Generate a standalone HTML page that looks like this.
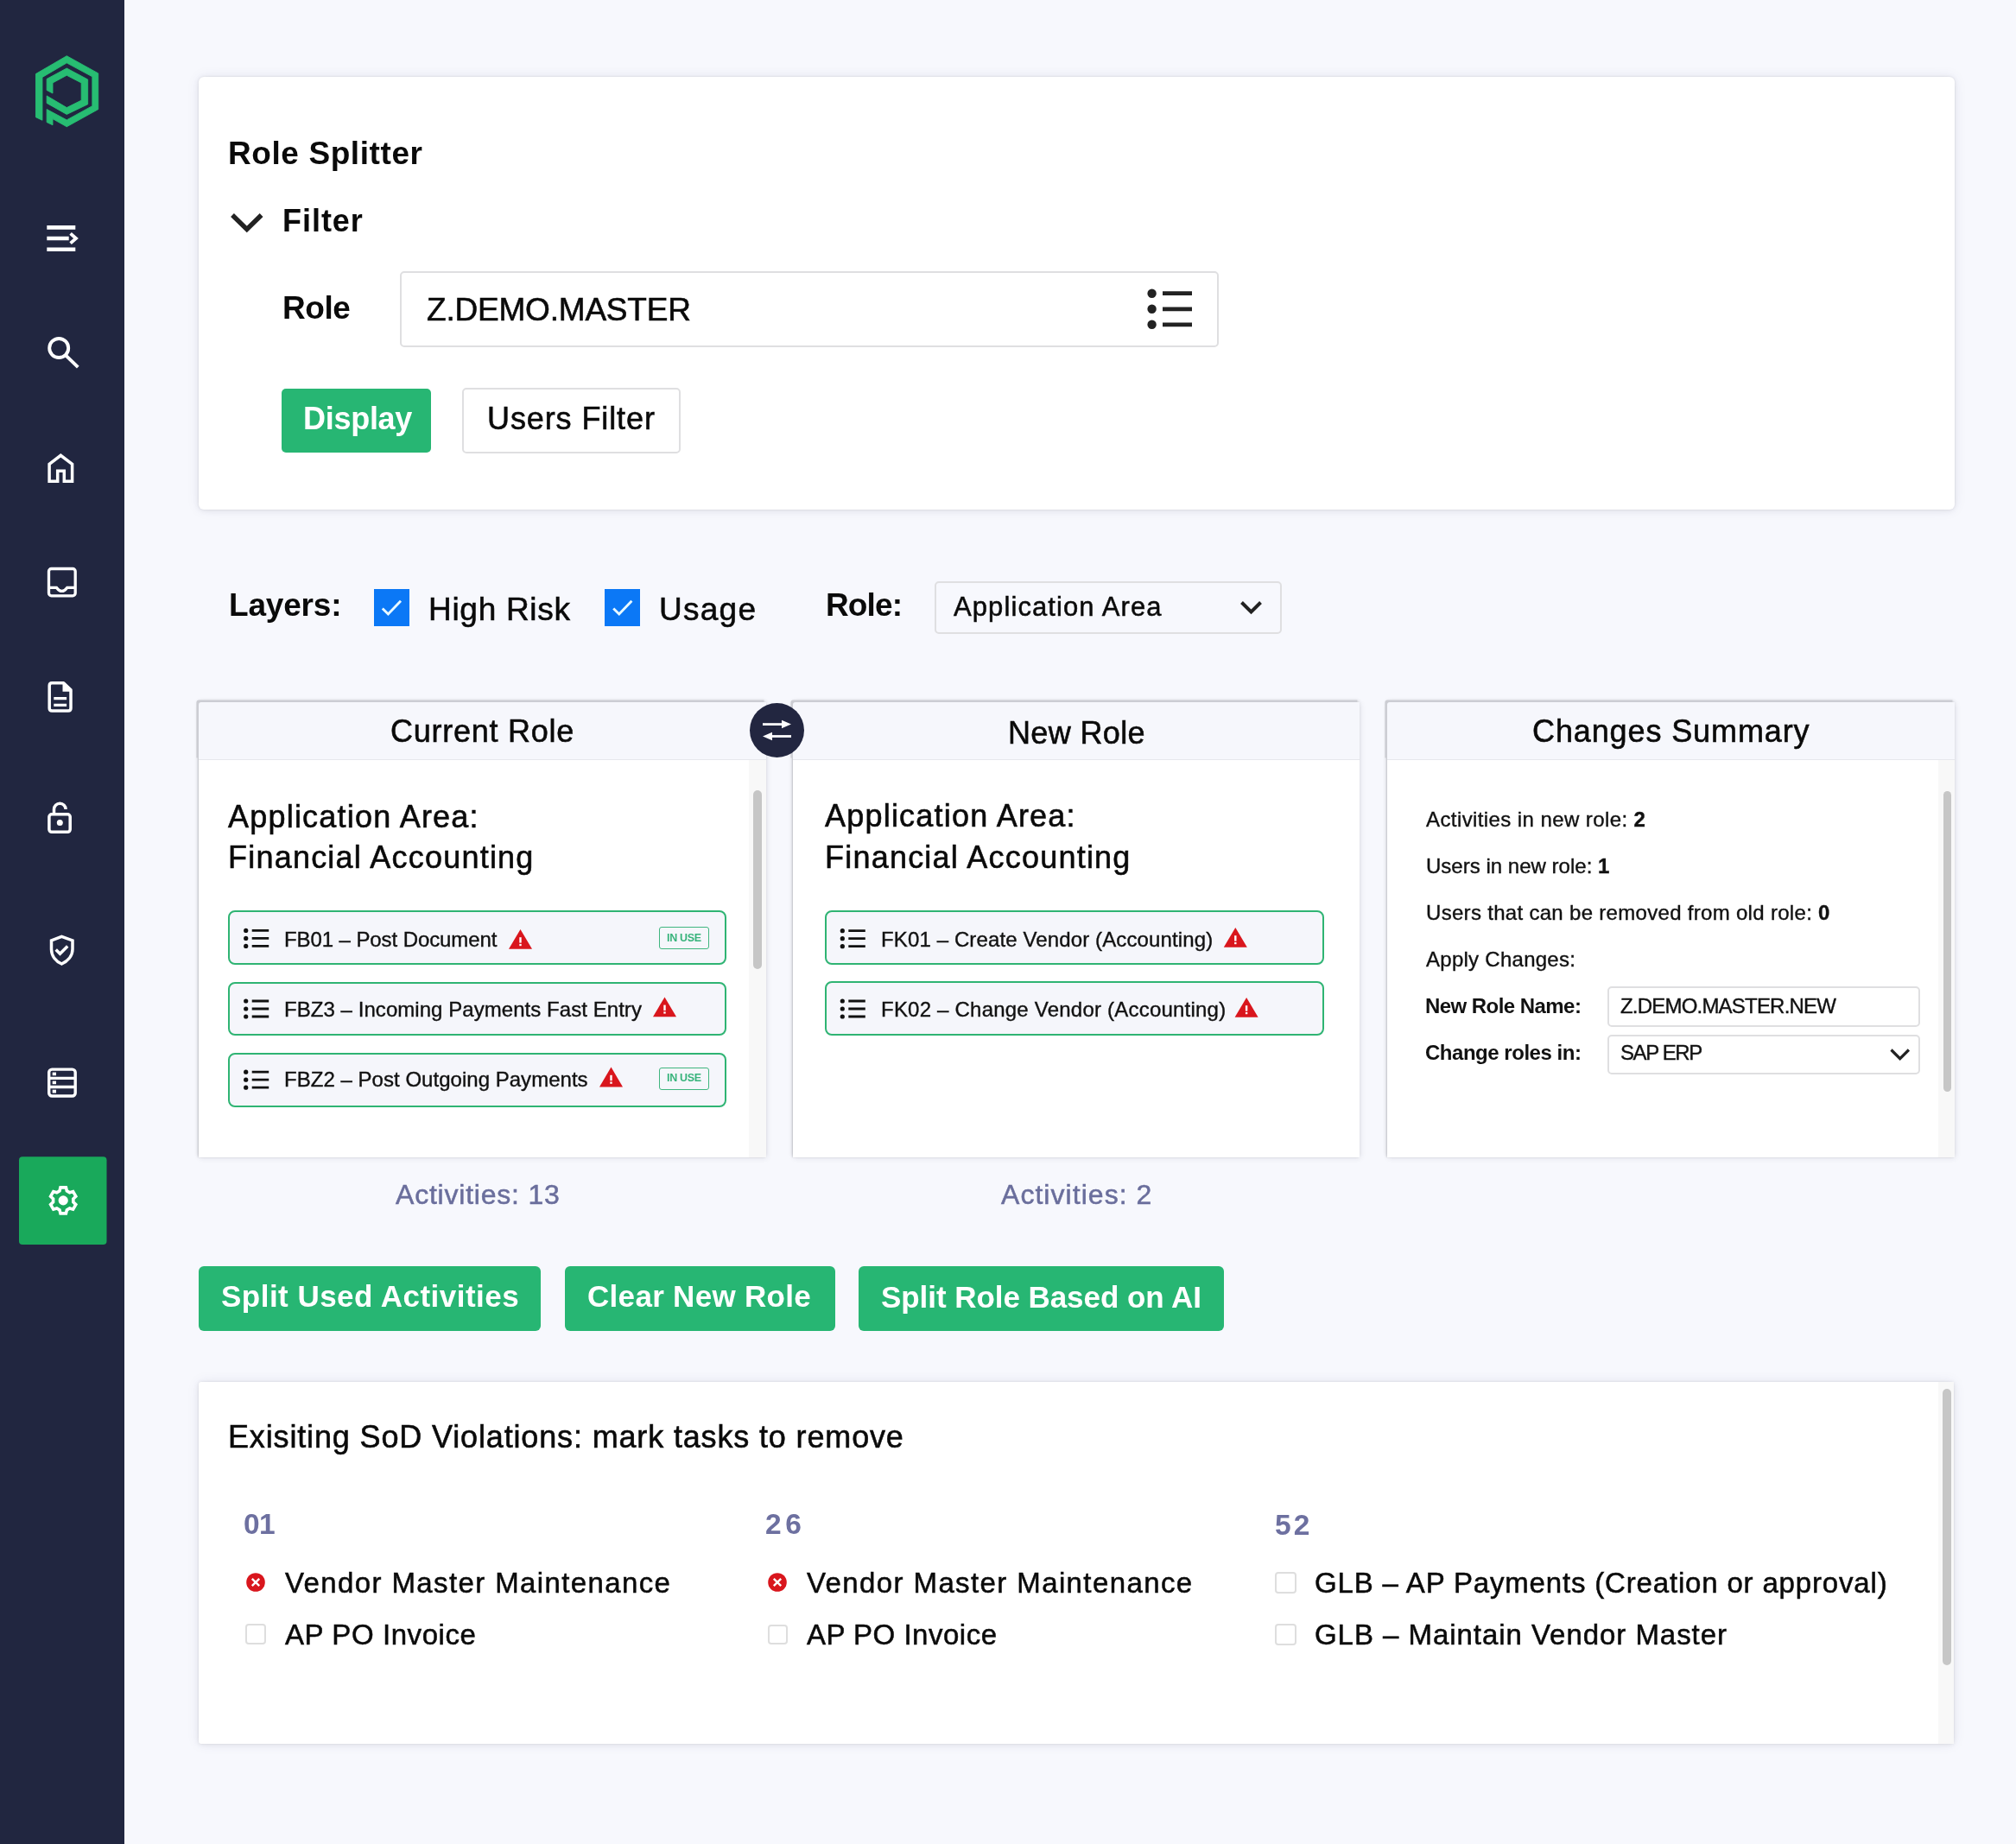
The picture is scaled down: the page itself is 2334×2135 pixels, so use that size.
<!DOCTYPE html>
<html><head><meta charset="utf-8"><title>Role Splitter</title>
<style>
html,body{margin:0;padding:0;}
body{width:2334px;height:2135px;background:#f7f8fd;position:relative;overflow:hidden;font-family:"Liberation Sans",sans-serif;}
.a{position:absolute;box-sizing:border-box;}
.t{position:absolute;white-space:nowrap;line-height:1;will-change:transform;font-family:"Liberation Sans",sans-serif;}
.t b{font-weight:700;}
.sidebar{left:0;top:0;width:144px;height:2135px;background:#212640;}
.card{background:#fff;border-radius:6px;box-shadow:0 0 3px rgba(0,0,0,0.08),0 1px 7px rgba(0,0,0,0.07),0 0 16px rgba(40,40,110,0.07);}
.panel{background:#fff;border-radius:3px 0 0 0;box-shadow:-1px -2px 4px rgba(0,0,0,0.10),1px 1px 6px rgba(40,40,70,0.10),-1px 0 2px rgba(0,0,0,0.12);}
.phead{background:#f6f7fc;border-bottom:1px solid #e6e7ec;border-radius:3px 0 0 0;box-shadow:-2.6px -2.6px 0 0 #cccdd3;}
.item{background:#f5f6fb;border:2.5px solid #2fb473;border-radius:8px;}
.btn{background:#27b673;border-radius:6px;}
.inp{border:2px solid #dfdfe1;border-radius:5px;}
.badge{border:1.8px solid #40b67f;border-radius:3px;}
.track{background:#f8f8f8;}
.thumb{background:#c6c6c6;border-radius:5px;}
.cb{background:#0b78f6;}
.ecb{border:2px solid #dedede;border-radius:4px;background:#fff;}

</style></head><body>
<div class="a sidebar"></div>
<!-- logo -->
<svg class="a" style="left:20px;top:40px" width="120" height="120" viewBox="0 0 1844 1844">
  <g fill="#27bd72" stroke="#27bd72" stroke-width="14" stroke-linejoin="round">
    <path d="M330,1470 L330,700 L880,380 L1440,690 L1440,1330 L880,1640 L630,1500 L630,1610 L525,1560 L525,1330 L880,1520 L1335,1270 L1335,750 L880,505 L445,760 L445,1525 Z"/>
    <path d="M525,990 L525,790 L880,600 L1255,800 L1255,1240 L880,1420 L525,1220 L525,1090 L880,1300 L1140,1170 L1140,860 L880,725 L630,860 L630,1045 Z"/>
  </g>
</svg>
<!-- sidebar icons -->
<svg class="a" style="left:0;top:0" width="144" height="1460" viewBox="0 0 144 1460">
  <g fill="none" stroke="#fff" stroke-width="4.6" stroke-linecap="butt" stroke-linejoin="miter">
    <path d="M54.3,263.4 H87.3 M54.3,276 H79.7 M54.3,288.7 H87.3"/>
    <path d="M81.6,270.3 L88,276 L81.6,281.6" stroke-width="3.8"/>
  </g>
  <g fill="none" stroke="#fff" stroke-width="3.9">
    <circle cx="68.2" cy="403" r="11"/>
    <path d="M76.3,411.6 L90.3,425.1"/>
  </g>
  <path d="M74.3,557.3 L83.6,557.3 L83.6,537.3 L70.3,527.3 L57.1,537.3 L57.1,557.3 L66.7,557.3 L66.7,545.3 L74.3,545.3 Z" fill="none" stroke="#fff" stroke-width="3.5"/>
  <g fill="none" stroke="#fff" stroke-width="3.3">
    <rect x="56.5" y="658.5" width="30.7" height="31.3" rx="3"/>
    <path d="M56.5,680.4 L65.5,680.4 Q71.6,688.5 77.7,680.4 L87.2,680.4"/>
  </g>
  <g fill="none" stroke="#fff" stroke-width="3.5" stroke-linejoin="round">
    <path d="M73.6,790.7 L60.2,790.7 Q57.2,790.7 57.2,793.7 L57.2,820.1 Q57.2,823.1 60.2,823.1 L79,823.1 Q82,823.1 82,820.1 L82,798.8 Z"/>
    <path d="M62.3,808.6 H77.1 M62.3,816.3 H77.1" stroke-width="3.2"/>
  </g>
  <path d="M72.5,789.5 L72.5,800.8 L83.5,800.8 Z" fill="#fff"/>
  <g fill="none" stroke="#fff" stroke-width="3.5">
    <rect x="56.9" y="942.8" width="24.3" height="20.5" rx="3"/>
    <path d="M62.5,942.8 L62.5,937 A6.8,6.8 0 0 1 76.1,937"/>
  </g>
  <circle cx="69.3" cy="952.5" r="3.5" fill="#fff"/>
  <g fill="none" stroke="#fff" stroke-width="3.5">
    <path d="M71.4,1084.3 L84,1088.9 L84,1099 C84,1107 78,1113 71.4,1116 C64.8,1113 59.5,1107 59.5,1099 L59.5,1088.9 Z"/>
    <path d="M64.7,1099.5 L69.5,1104.3 L78.2,1095.6"/>
  </g>
  <g fill="none" stroke="#fff" stroke-width="3.4">
    <rect x="56.7" y="1238.1" width="30.5" height="30.9" rx="3.5"/>
    <path d="M56.7,1248.4 H87.2 M56.7,1258.5 H87.2"/>
  </g>
  <g fill="#fff">
    <rect x="60.7" y="1241.6" width="4.3" height="3.6"/>
    <rect x="60.7" y="1251.6" width="4.3" height="3.6"/>
    <rect x="60.7" y="1261.7" width="4.3" height="3.8"/>
  </g>
  <rect x="22" y="1339.2" width="101.5" height="101.8" rx="4" fill="#19a95b"/>
  <path d="M69.00,1378.90 L70.00,1374.90 L76.40,1374.90 L77.40,1378.90 L80.63,1380.76 L84.59,1379.63 L87.79,1385.17 L84.83,1388.04 L84.83,1391.76 L87.79,1394.63 L84.59,1400.17 L80.63,1399.04 L77.40,1400.90 L76.40,1404.90 L70.00,1404.90 L69.00,1400.90 L65.77,1399.04 L61.81,1400.17 L58.61,1394.63 L61.57,1391.76 L61.57,1388.04 L58.61,1385.17 L61.81,1379.63 L65.77,1380.76 Z" fill="none" stroke="#fff" stroke-width="3.6" stroke-linejoin="miter"/>
  <circle cx="73.2" cy="1389.9" r="5.6" fill="#fff"/>
</svg>

<!-- top card -->
<div class="a card" style="left:230px;top:89px;width:2033px;height:501px"></div>
<svg class="a" style="left:260px;top:240px" width="50" height="35" viewBox="260 240 50 35">
  <path d="M269,249 L285.8,265.5 L302.6,249" fill="none" stroke="#222" stroke-width="5.5"/>
</svg>
<div class="a inp" style="left:463px;top:314px;width:948px;height:88px;background:#fff"></div>
<svg class="a" style="left:1320px;top:325px" width="70" height="65" viewBox="1320 325 70 65">
  <g fill="#222"><circle cx="1333.6" cy="339.7" r="5.2"/><circle cx="1333.6" cy="357.8" r="5.2"/><circle cx="1333.6" cy="375.8" r="5.2"/></g>
  <g stroke="#222" stroke-width="4.8"><path d="M1346,339.7 H1380 M1346,357.8 H1380 M1346,375.8 H1380"/></g>
</svg>
<div class="a btn" style="left:326px;top:450px;width:173px;height:74px;border-radius:5px"></div>
<div class="a inp" style="left:534.6px;top:449.4px;width:253px;height:75.6px;background:#fff"></div>

<!-- layers row -->
<div class="a cb" style="left:433px;top:682px;width:41px;height:43px"></div>
<div class="a cb" style="left:700.4px;top:682px;width:41px;height:43px"></div>
<svg class="a" style="left:430px;top:680px" width="320" height="50" viewBox="430 680 320 50">
  <path d="M442.8,704.5 L449.4,711 L464,695.8" fill="none" stroke="#e8f9ff" stroke-width="2.9"/>
  <path d="M710.2,704.5 L716.8,711 L731.4,695.8" fill="none" stroke="#e8f9ff" stroke-width="2.9"/>
</svg>
<div class="a inp" style="left:1082px;top:673px;width:402px;height:61px"></div>
<svg class="a" style="left:1430px;top:690px" width="40" height="30" viewBox="1430 690 40 30">
  <path d="M1437.5,697.5 L1448.5,708.5 L1459.5,697.5" fill="none" stroke="#222" stroke-width="4"/>
</svg>

<!-- panels -->
<div class="a panel" style="left:230px;top:813px;width:657px;height:527px"></div>
<div class="a phead" style="left:230px;top:813px;width:657px;height:67px"></div>
<div class="a track" style="left:867px;top:880px;width:20px;height:460px"></div>
<div class="a thumb" style="left:872.2px;top:915px;width:9.8px;height:207px"></div>

<div class="a panel" style="left:918px;top:813px;width:656px;height:527px"></div>
<div class="a phead" style="left:918px;top:813px;width:656px;height:67px"></div>

<div class="a panel" style="left:1606px;top:813px;width:657px;height:527px"></div>
<div class="a phead" style="left:1606px;top:813px;width:657px;height:67px"></div>
<div class="a track" style="left:2244px;top:880px;width:19px;height:460px"></div>
<div class="a thumb" style="left:2249.6px;top:915.7px;width:9.8px;height:348px"></div>

<!-- swap circle -->
<svg class="a" style="left:866px;top:812px" width="68" height="68" viewBox="866 812 68 68">
  <circle cx="899.5" cy="845.5" r="31.5" fill="#222640"/>
  <g fill="#fff">
    <rect x="883" y="837.2" width="24" height="2.8"/>
    <path d="M905,833.8 L916,838.6 L905,843.3 Z"/>
    <rect x="892" y="851.1" width="24" height="2.8"/>
    <path d="M894,847.7 L883,852.5 L894,857.2 Z"/>
  </g>
</svg>

<!-- items panel 1 -->
<div class="a item" style="left:264px;top:1054px;width:577px;height:63px"></div>
<div class="a item" style="left:264px;top:1137px;width:577px;height:62px"></div>
<div class="a item" style="left:264px;top:1219px;width:577px;height:63px"></div>
<!-- items panel 2 -->
<div class="a item" style="left:954.6px;top:1054.3px;width:578.4px;height:62.5px"></div>
<div class="a item" style="left:954.6px;top:1136.4px;width:578.4px;height:62.9px"></div>


<div class="a badge" style="left:763.3px;top:1073.4px;width:57.9px;height:26.1px"></div>
<div class="a badge" style="left:763.3px;top:1236.2px;width:57.9px;height:26.1px"></div>

<!-- panel3 inputs -->
<div class="a inp" style="left:1860.8px;top:1142.3px;width:362.7px;height:46.5px;background:#fff"></div>
<div class="a inp" style="left:1860.8px;top:1198px;width:362.7px;height:46.3px;background:#fff"></div>

<!-- bottom buttons -->
<div class="a btn" style="left:230px;top:1465.5px;width:396px;height:75px"></div>
<div class="a btn" style="left:654px;top:1465.5px;width:313px;height:75px"></div>
<div class="a btn" style="left:994.2px;top:1465.5px;width:423px;height:75px"></div>

<!-- bottom card -->
<div class="a card" style="left:230px;top:1600px;width:2032px;height:419px;border-radius:3px"></div>
<div class="a track" style="left:2244px;top:1600px;width:18px;height:419px"></div>
<div class="a thumb" style="left:2248.8px;top:1607.7px;width:10px;height:320px"></div>
<div class="a ecb" style="left:284.4px;top:1880.3px;width:23.2px;height:23.8px"></div>
<div class="a ecb" style="left:888.5px;top:1880.6px;width:23.2px;height:23.2px"></div>
<div class="a ecb" style="left:1476px;top:1820px;width:24.6px;height:24.5px"></div>
<div class="a ecb" style="left:1476px;top:1880.3px;width:24.6px;height:24.5px"></div>

<svg class="a" style="left:0;top:0" width="2334" height="2135" viewBox="0 0 2334 2135">
  <defs>
    <g id="li">
      <circle cx="3" cy="3" r="2.6" fill="#111"/><circle cx="3" cy="12" r="2.6" fill="#111"/><circle cx="3" cy="21" r="2.6" fill="#111"/>
      <path d="M10,3 H29.5 M10,12 H29.5 M10,21 H29.5" stroke="#111" stroke-width="2.8"/>
    </g>
    <g id="warn">
      <path d="M13.5,0 L27,22.8 L0,22.8 Z" fill="#d9161d"/>
      <rect x="12.3" y="9.2" width="2.4" height="6.4" fill="#fff"/>
      <rect x="12.3" y="16.9" width="2.4" height="2.3" fill="#fff"/>
    </g>
    <g id="xc">
      <circle cx="0" cy="0" r="10.8" fill="#d9161d"/>
      <path d="M-4.2,-4.2 L4.2,4.2 M4.2,-4.2 L-4.2,4.2" stroke="#fff" stroke-width="2.4"/>
    </g>
  </defs>
  <use href="#li" x="281.7" y="1074.4"/>
  <use href="#li" x="281.7" y="1156"/>
  <use href="#li" x="281.7" y="1238.2"/>
  <use href="#li" x="972.3" y="1074.7"/>
  <use href="#li" x="972.3" y="1156"/>
  <use href="#warn" x="589" y="1076"/>
  <use href="#warn" x="756" y="1154.4"/>
  <use href="#warn" x="694" y="1235.6"/>
  <use href="#warn" x="1416.8" y="1074"/>
  <use href="#warn" x="1429.6" y="1155"/>
  <use href="#xc" x="296" y="1832"/>
  <use href="#xc" x="900" y="1832"/>
  <path d="M2189.5,1215.5 L2199.7,1225.7 L2209.9,1215.5" fill="none" stroke="#222" stroke-width="3.2"/>
</svg>

<div class="t" style="left:264.2px;top:158.7px;font-size:37px;font-weight:700;color:#0a0a0a;letter-spacing:0.587px;">Role Splitter</div>
<div class="t" style="left:326.6px;top:238.0px;font-size:36px;font-weight:700;color:#0a0a0a;letter-spacing:0.973px;">Filter</div>
<div class="t" style="left:326.5px;top:337.7px;font-size:37px;font-weight:700;color:#0a0a0a;letter-spacing:-0.409px;">Role</div>
<div class="t" style="left:493.5px;top:339.7px;font-size:37px;font-weight:400;color:#0a0a0a;letter-spacing:-0.199px;-webkit-text-stroke:0.59px #0a0a0a;">Z.DEMO.MASTER</div>
<div class="t" style="left:351.1px;top:466.5px;font-size:36px;font-weight:700;color:#ffffff;letter-spacing:-0.280px;">Display</div>
<div class="t" style="left:564.3px;top:466.5px;font-size:36px;font-weight:400;color:#0a0a0a;letter-spacing:0.897px;-webkit-text-stroke:0.58px #0a0a0a;">Users Filter</div>
<div class="t" style="left:264.5px;top:681.7px;font-size:37px;font-weight:700;color:#0a0a0a;letter-spacing:-0.197px;">Layers:</div>
<div class="t" style="left:496.1px;top:686.7px;font-size:37px;font-weight:400;color:#0a0a0a;letter-spacing:0.704px;-webkit-text-stroke:0.59px #0a0a0a;">High Risk</div>
<div class="t" style="left:762.5px;top:686.7px;font-size:37px;font-weight:400;color:#0a0a0a;letter-spacing:1.252px;-webkit-text-stroke:0.59px #0a0a0a;">Usage</div>
<div class="t" style="left:955.5px;top:682.3px;font-size:37px;font-weight:700;color:#0a0a0a;letter-spacing:-0.885px;">Role:</div>
<div class="t" style="left:1103.8px;top:687.4px;font-size:31px;font-weight:400;color:#0a0a0a;letter-spacing:1.096px;-webkit-text-stroke:0.50px #0a0a0a;">Application Area</div>
<div class="t" style="left:451.6px;top:828.5px;font-size:36px;font-weight:400;color:#0a0a0a;letter-spacing:0.753px;-webkit-text-stroke:0.58px #0a0a0a;">Current Role</div>
<div class="t" style="left:1167.2px;top:830.5px;font-size:36px;font-weight:400;color:#0a0a0a;letter-spacing:0.360px;-webkit-text-stroke:0.58px #0a0a0a;">New Role</div>
<div class="t" style="left:1774.4px;top:828.9px;font-size:36px;font-weight:400;color:#0a0a0a;letter-spacing:0.889px;-webkit-text-stroke:0.58px #0a0a0a;">Changes Summary</div>
<div class="t" style="left:263.6px;top:927.5px;font-size:36px;font-weight:400;color:#0a0a0a;letter-spacing:1.212px;-webkit-text-stroke:0.58px #0a0a0a;">Application Area:</div>
<div class="t" style="left:263.6px;top:974.5px;font-size:36px;font-weight:400;color:#0a0a0a;letter-spacing:1.219px;-webkit-text-stroke:0.58px #0a0a0a;">Financial Accounting</div>
<div class="t" style="left:329.0px;top:1076.0px;font-size:24px;font-weight:400;color:#111;letter-spacing:-0.090px;-webkit-text-stroke:0.38px #111;">FB01 – Post Document</div>
<div class="t" style="left:329.0px;top:1157.2px;font-size:24px;font-weight:400;color:#111;letter-spacing:0.052px;-webkit-text-stroke:0.38px #111;">FBZ3 – Incoming Payments Fast Entry</div>
<div class="t" style="left:329.0px;top:1238.2px;font-size:24px;font-weight:400;color:#111;letter-spacing:0.028px;-webkit-text-stroke:0.38px #111;">FBZ2 – Post Outgoing Payments</div>
<div class="t" style="left:955.0px;top:927.0px;font-size:36px;font-weight:400;color:#0a0a0a;letter-spacing:1.212px;-webkit-text-stroke:0.58px #0a0a0a;">Application Area:</div>
<div class="t" style="left:955.0px;top:974.9px;font-size:36px;font-weight:400;color:#0a0a0a;letter-spacing:1.219px;-webkit-text-stroke:0.58px #0a0a0a;">Financial Accounting</div>
<div class="t" style="left:1020.4px;top:1076.0px;font-size:24px;font-weight:400;color:#111;letter-spacing:0.122px;-webkit-text-stroke:0.38px #111;">FK01 – Create Vendor (Accounting)</div>
<div class="t" style="left:1020.4px;top:1157.2px;font-size:24px;font-weight:400;color:#111;letter-spacing:0.215px;-webkit-text-stroke:0.38px #111;">FK02 – Change Vendor (Accounting)</div>
<div class="t" style="left:1650.5px;top:937.1px;font-size:24px;font-weight:400;color:#111;letter-spacing:0.408px;-webkit-text-stroke:0.38px #111;">Activities in new role: <b>2</b></div>
<div class="t" style="left:1650.5px;top:990.5px;font-size:24px;font-weight:400;color:#111;letter-spacing:0.016px;-webkit-text-stroke:0.38px #111;">Users in new role: <b>1</b></div>
<div class="t" style="left:1650.5px;top:1045.0px;font-size:24px;font-weight:400;color:#111;letter-spacing:0.306px;-webkit-text-stroke:0.38px #111;">Users that can be removed from old role: <b>0</b></div>
<div class="t" style="left:1650.5px;top:1099.1px;font-size:24px;font-weight:400;color:#111;letter-spacing:0.267px;-webkit-text-stroke:0.38px #111;">Apply Changes:</div>
<div class="t" style="left:1650.0px;top:1152.7px;font-size:24px;font-weight:700;color:#111;letter-spacing:-0.549px;">New Role Name:</div>
<div class="t" style="left:1876.2px;top:1152.7px;font-size:24px;font-weight:400;color:#111;letter-spacing:-0.797px;-webkit-text-stroke:0.38px #111;">Z.DEMO.MASTER.NEW</div>
<div class="t" style="left:1650.0px;top:1206.9px;font-size:24px;font-weight:700;color:#111;letter-spacing:-0.474px;">Change roles in:</div>
<div class="t" style="left:1876.0px;top:1206.9px;font-size:24px;font-weight:400;color:#111;letter-spacing:-1.398px;-webkit-text-stroke:0.38px #111;">SAP ERP</div>
<div class="t" style="left:458.1px;top:1366.6px;font-size:32px;font-weight:400;color:#6a6e9c;letter-spacing:0.787px;-webkit-text-stroke:0.51px #6a6e9c;">Activities: 13</div>
<div class="t" style="left:1158.9px;top:1366.5px;font-size:32px;font-weight:400;color:#6a6e9c;letter-spacing:1.044px;-webkit-text-stroke:0.51px #6a6e9c;">Activities: 2</div>
<div class="t" style="left:256.0px;top:1483.4px;font-size:35px;font-weight:700;color:#ffffff;letter-spacing:0.476px;">Split Used Activities</div>
<div class="t" style="left:680.3px;top:1483.4px;font-size:35px;font-weight:700;color:#ffffff;letter-spacing:0.307px;">Clear New Role</div>
<div class="t" style="left:1020.1px;top:1483.8px;font-size:35px;font-weight:700;color:#ffffff;letter-spacing:-0.057px;">Split Role Based on AI</div>
<div class="t" style="left:264.2px;top:1645.5px;font-size:36px;font-weight:400;color:#0a0a0a;letter-spacing:0.850px;-webkit-text-stroke:0.58px #0a0a0a;">Exisiting SoD Violations: mark tasks to remove</div>
<div class="t" style="left:282.2px;top:1748.2px;font-size:33.5px;font-weight:700;color:#6d70a0;letter-spacing:-0.586px;">01</div>
<div class="t" style="left:886.4px;top:1748.2px;font-size:33.5px;font-weight:700;color:#6d70a0;letter-spacing:4.714px;">26</div>
<div class="t" style="left:1475.8px;top:1748.5px;font-size:33.5px;font-weight:700;color:#6d70a0;letter-spacing:3.114px;">52</div>
<div class="t" style="left:330.4px;top:1815.5px;font-size:33px;font-weight:400;color:#0a0a0a;letter-spacing:1.383px;-webkit-text-stroke:0.53px #0a0a0a;">Vendor Master Maintenance</div>
<div class="t" style="left:330.4px;top:1875.8px;font-size:33px;font-weight:400;color:#0a0a0a;letter-spacing:0.577px;-webkit-text-stroke:0.53px #0a0a0a;">AP PO Invoice</div>
<div class="t" style="left:934.2px;top:1815.5px;font-size:33px;font-weight:400;color:#0a0a0a;letter-spacing:1.391px;-webkit-text-stroke:0.53px #0a0a0a;">Vendor Master Maintenance</div>
<div class="t" style="left:934.2px;top:1875.8px;font-size:33px;font-weight:400;color:#0a0a0a;letter-spacing:0.502px;-webkit-text-stroke:0.53px #0a0a0a;">AP PO Invoice</div>
<div class="t" style="left:1521.9px;top:1815.5px;font-size:33px;font-weight:400;color:#0a0a0a;letter-spacing:0.827px;-webkit-text-stroke:0.53px #0a0a0a;">GLB – AP Payments (Creation or approval)</div>
<div class="t" style="left:1521.9px;top:1875.8px;font-size:33px;font-weight:400;color:#0a0a0a;letter-spacing:0.955px;-webkit-text-stroke:0.53px #0a0a0a;">GLB – Maintain Vendor Master</div>
<div class="t" style="left:772.0px;top:1080.4px;font-size:12.5px;font-weight:700;color:#37b37b;letter-spacing:-0.317px;">IN USE</div>
<div class="t" style="left:772.0px;top:1242.4px;font-size:12.5px;font-weight:700;color:#37b37b;letter-spacing:-0.317px;">IN USE</div>
</body></html>
